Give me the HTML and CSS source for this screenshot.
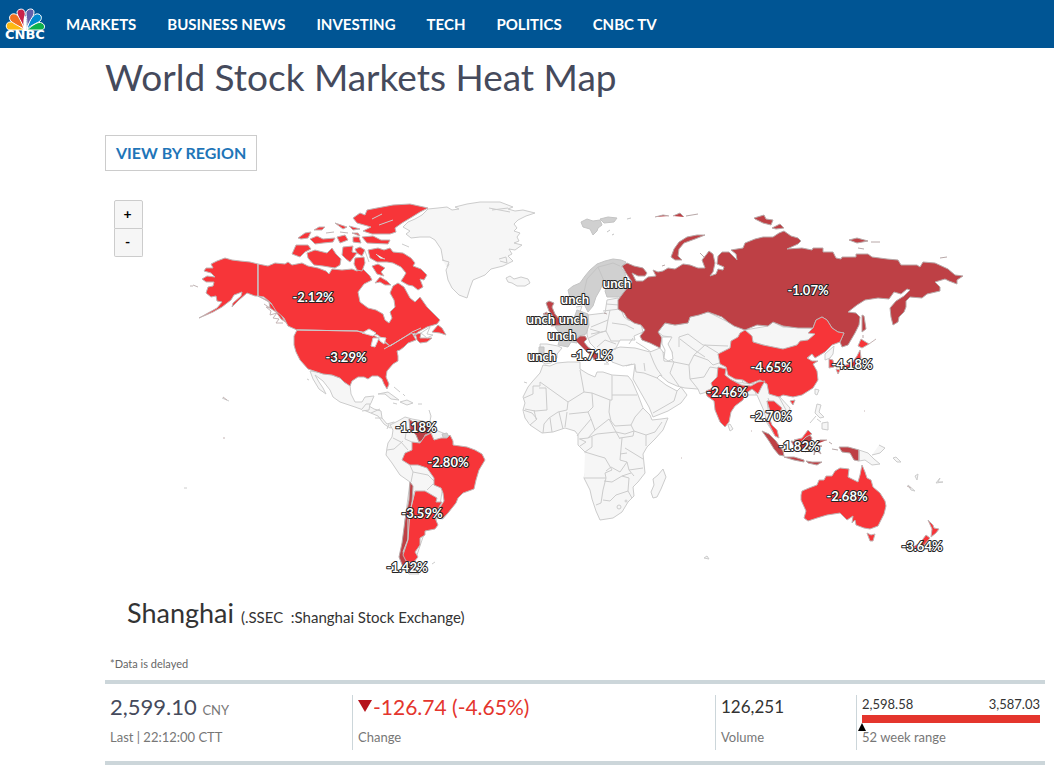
FILE: index.html
```html
<!DOCTYPE html>
<html lang="en">
<head>
  <meta charset="UTF-8">
  <meta name="viewport" content="width=device-width, initial-scale=1.0">
  <title>World Stock Markets Heat Map</title>
  <link rel="stylesheet" href="styles.css">
</head>
<body>
  <header class="topbar">
    <a href="#" class="logo" aria-label="CNBC">
      <svg width="48" height="40" viewBox="-2 -3 48 40">
        <g stroke="#fff" stroke-width="1">
          <path fill="#fdb913" d="M20 23H6C1 23 1 15 6 15C10 14 14 18 20 23Z"/>
          <path fill="#f37021" d="M20 22C15 19 8 16 6 13C4 8 9 5 13 8C17 11 18 16 20 22Z"/>
          <path fill="#c9234a" d="M20 21C18 15 13 9 13 5C14 1 21 1 21 6C22 8 19 10 20 21Z"/>
          <path fill="#6460aa" d="M23 21C23 11 22 8 22 5C24 1 30 1 30 5C30 10 25 15 23 21Z"/>
          <path fill="#0089cf" d="M23 22C25 15 28 9 32 7C37 6 39 11 36 14C34 16 27 18 23 22Z"/>
          <path fill="#0db14b" d="M23 23C29 18 34 14 38 16C42 18 41 23 37 23Z"/>
        </g>
        <path fill="#fff" d="M20 24V10L22 9L23 24Z"/>
        <text x="1" y="32" class="logo-text">CNBC</text>
      </svg>
    </a>
    <nav class="menu">
      <a href="#">MARKETS</a>
      <a href="#">BUSINESS NEWS</a>
      <a href="#">INVESTING</a>
      <a href="#">TECH</a>
      <a href="#">POLITICS</a>
      <a href="#">CNBC TV</a>
    </nav>
  </header>

  <main class="page">
    <h1>World Stock Markets Heat Map</h1>
    <button type="button" class="region-button">VIEW BY REGION</button>

    <div class="map">
      <div class="zoom">
        <button type="button" aria-label="Zoom in">+</button>
        <button type="button" aria-label="Zoom out">-</button>
      </div>
      <svg viewBox="105 185 940 400" role="img" aria-label="World map">
        <!-- markets without data -->
        <g class="none">
          <path d="M403 227L408 222 415 219 422 215 428 209 438 208 447 207 452 210 459 209 455 207 467 204 480 202 500 202 513 207 508 209 515 211 523 210 535 213 526 216 518 220 514 224 517 228 514 231 520 233 517 237 519 241 514 243 522 245 515 250 509 249 512 254 508 256 513 261 503 266 491 269 485 275 473 280 470 288 467 298 459 295 452 288 448 280 446 270 449 264 443 260 441 249 435 240 430 237 420 237 411 238 406 234 410 231Z"/>
          <path d="M442 260L449 262 447 267M499 259L506 257 507 263 500 261M489 208L510 212M492 210L508 208"/>
          <path d="M506 278L510 276 514 279 521 277 528 279 530 283 525 286 517 286 512 283 508 282Z"/>
          <!-- central america -->
          <path d="M310 371L323 373 332 375 340 378 344 382 350 385 351 394 355 402 362 402 365 397 374 396 371 403 369 406 374 409 381 411 382 418 387 424 394 422 398 425 390 428 384 424 378 416 366 411 355 407 340 402 333 397 330 390 323 381 315 375 319 382 323 388 326 394 319 389 313 379Z"/>
          <path d="M362 409L366 404H370L369 410 362 411M371 413L380 409M375 418L382 418M389 424L387 429"/>
          <path d="M378 394L388 392 399 400 391 399 385 394ZM400 402L407 400 413 403 407 405ZM393 403L397 404M418 404H422M394 387L400 392M403 394L405 396M429 410L431 416 430 421M307 379L309 380"/>
          <!-- south america -->
          <path d="M390 425L398 421 405 417 412 419 423 421 433 427 438 431 448 435 453 443 442 492 440 505 442 514 437 519 435 522 425 531 412 570 405 568 405 520 410 482 400 475 392 463 386 455 387 448 388 443 392 437 393 430Z"/>
          <path d="M393 438L401 442 408 450M387 450L394 449 403 441M409 463L413 472 411 482M413 472L428 475 435 482M427 490L433 484 442 488M427 492L435 499M430 431L432 439M407 427L405 439 412 442"/>
          <path d="M434 518L440 510 448 513 443 519ZM404 569L412 570 419 574 409 574ZM432 564L435 562"/>
          <!-- africa -->
          <path d="M543 365L550 366 557 363 568 362 580 362 580 369 588 374 595 377 597 372 603 372 612 375 628 376 632 381 638 395 643 408 650 415 652 420 661 419 668 418 663 430 655 439 647 447 643 454 645 473 638 482 633 487 634 496 628 502 622 512 613 518 600 520 596 511 592 499 590 490 584 478 588 463 585 452 578 445 578 435 575 431 565 428 553 432 542 433 530 425 525 418 523 410 525 403 523 397 528 387 532 382 540 373Z"/>
          <path d="M540 382L568 402 584 392 580 370M540 382V386H533V394L524 398M539 388H546L547 410 535 411 525 409M568 402L567 410 558 412 549 418 544 424M584 392L592 393 610 400M592 393L593 407 588 412 569 414M612 375V395H637M612 395V400H610L609 412 611 421 615 426 631 425 635 417 643 408M588 412L591 419 580 432 577 436M591 419L595 430 609 419M595 430L588 438 579 439M609 419L616 432 625 434 634 431 631 425M634 431L646 435 655 432 662 422 M646 435V446M616 432L620 439M588 438L597 434 616 432M585 452L598 456 605 458 612 470 605 473 606 478H584M606 471L611 467 620 472 627 462 620 460 622 438M620 438L633 436 634 431M620 454L627 453M625 448L643 459M627 462L629 470 643 468M629 470L634 476M606 478L603 490 601 503 596 505M604 481L612 482 622 476 629 478 628 491 616 495 610 501 603 500M628 491L632 498M622 476L631 473M544 424L543 433M550 418L552 432M559 412L563 429M567 412L565 427M580 439L586 442 580 446M592 437L592 447 585 452M523 410L532 413 537 419 530 425M534 410L536 419"/>
          <circle cx="619" cy="507" r="2"/><circle cx="626" cy="501" r="1"/>
          <path d="M663 469L666 477 661 489 657 497 653 498 651 492 654 485 653 479 658 475Z"/>
          <!-- middle east and central asia -->
          <path d="M611 350L620 347 635 348 650 352 660 348 663 352 664 361 674 362 672 352 666 342 671 337 663 336 658 332 665 323 675 325 688 323 690 317 708 312 728 322 745 330 768 326 773 322 783 327 813 328 820 340 790 385 780 397 790 408 788 416 783 420 780 411 767 401 770 423 777 432 774 434 767 423 764 411 757 395 745 395 725 390 707 392 700 394 698 389 685 388 677 386 668 382 660 375 657 378 666 385 677 391 681 387 687 395 681 403 668 411 653 417 649 407 641 393 633 379 635 364 623 366 612 362Z"/>
          <path d="M635 365L636 372 644 373 657 378M644 363L645 371M650 353L654 363 657 369 662 376M677 391L674 401 653 413M663 352L674 362 689 365 694 355 708 360 713 365 722 362M674 362L670 373 679 386M689 365L690 379 698 389M694 355L705 345 718 353M680 339L693 349 705 357M679 347V337L688 334 703 345 728 346M690 379L704 377 710 367 722 369M728 379L739 383 748 382M747 386L755 387 756 395M768 398L771 406M779 397L786 410M745 331L753 342 767 346 784 350 799 344 808 340 817 334"/>
          <path d="M742 378L754 384 743 383ZM730 424L733 429 730 431 728 425Z"/>
          <!-- eastern europe -->
          <path d="M588 315L605 313 607 300 618 298 620 307 624 317 628 320 641 324 643 332 634 336 635 340 620 340 616 348 610 351 612 358 607 363 603 356 597 350 590 343 587 335Z"/>
          <path d="M603 311L620 309M606 304L619 305M610 310L608 320 591 327M608 320L606 331 591 334M606 331L611 341 619 341M589 338L599 333 606 331M597 347L605 340 616 344M612 323L626 325 634 329M607 351L616 349M590 329L600 332M636 342L644 347 651 352M633 338L629 344"/>
          <path d="M540 344L547 344 558 346 562 348 557 354 557 358 551 363 545 364 541 361ZM576 307L582 306 580 312 576 311M604 364H609M626 366L632 364M543 348L542 358"/>
          <!-- east asia and oceania -->
          <path d="M825 354L834 346 833 354 830 358 825 360ZM815 389L819 390 817 395 815 394ZM817 404L821 405 819 412 824 417 820 418 815 413ZM822 423L828 422 828 430 822 429ZM810 423L816 416M817 419L821 422M859 450L868 453 874 459 880 464 872 465 865 460 859 461ZM872 455L880 453 885 448 879 445M524 382L527 383M222 398L229 401M184 488H187"/>
          <path d="M893 458L896 457 901 462 897 462ZM915 476L918 474 917 480ZM908 485L915 491 911 490ZM936 483L940 478 938 482 943 482ZM704 558L707 556 709 559Z"/>
        </g>

        <!-- unchanged markets -->
        <g class="flat">
          <path d="M581 222L587 219 593 221 600 220 602 225 598 228 597 231 593 235 590 229 583 227ZM600 219L608 217 617 218 614 222 604 223ZM627 219L631 218M607 232L610 230M612 235L614 234"/>
          <path d="M568 290L573 286 580 283 585 276 590 270 597 264 605 261 613 259 621 260 626 262 621 267 625 273 626 280 631 285 629 292 620 297 607 297 605 291 609 283 604 281 600 290 596 297 593 306 588 312 585 306 583 298 574 302 570 298Z"/>
          <path d="M583 296L587 279 598 267 604 281M598 267L606 265 613 263 620 266"/>
          <path d="M555 327L566 323 574 318 577 310 588 314 589 325 586 334 579 336 577 343 571 342 568 347 558 345 561 335ZM540 319L547 313 548 322 541 325ZM539 347H544L544 360H539Z"/>
          <path d="M442 434L447 433 449 437 444 440Z"/>
        </g>

        <!-- small losses -->
        <g class="low">
          <path d="M622 266L627 263 634 266 643 268 647 273 645 276 638 276 632 273 636 281 643 281 648 277 656 276 653 270 658 272 663 271 668 268 675 269 683 264 690 265 698 268 705 268 702 260 706 255 709 251 713 254 715 263 713 272 710 276 716 274 718 269 723 270 724 267 717 264 718 256 722 252 729 252 733 256 737 260 736 254 731 250 743 248 745 243 755 239 763 237 773 237 779 233 784 231 791 236 798 238 801 241 798 244 787 249 802 248 812 250 813 248 823 248 823 252 833 252 836 258 841 259 842 257 856 257 856 254 868 254 872 257 887 259 898 260 901 265 917 265 920 267 923 262 935 263 948 269 955 275 963 276 957 280 957 284 949 281 945 279 935 282 940 287 940 291 927 294 922 298 910 297 906 301 906 307 904 312 899 317 898 322 893 325 891 317 890 308 896 301 904 296 910 290 907 289 901 294 894 292 889 299 878 298 865 300 857 305 848 312 856 313 860 317 859 325 855 333 848 345 842 347 840 342 844 333 838 332 832 328 827 320 822 317 816 320 813 328 798 328 783 326 773 322 768 326 757 325 745 330 734 326 728 322 722 317 708 312 699 315 690 317 688 323 675 325 665 323 658 332 662 338 660 348 650 343 642 340 640 336 645 330 641 325 634 323 627 318 624 313 618 309 618 300 624 292 632 282 626 273Z"/>
          <path d="M671 257L674 249 679 242 687 237 697 235 705 235 695 239 684 243 679 249 678 256 682 260 675 260ZM754 218L764 215 766 219 773 220 771 225 763 223 755 219ZM772 228L780 224 784 228 776 229ZM655 217L663 215 669 216M673 216L680 213 684 217M686 216L698 214M662 266L665 265M849 240L857 238 868 241 857 243ZM871 242L880 242M858 248L864 249M940 258L947 257M862 315L864 316 866 329 862 332ZM863 335V338M604 313L607 314M700 253L704 257"/>
          <path d="M546 303L549 301 554 303 552 307 555 314 560 320 561 325 551 326 555 321 552 315 549 311ZM543 314L547 312 547 315Z"/>
          <path d="M575 340L580 336 585 336 587 339 584 342 588 347 594 351 598 356 594 360 592 356 587 352 581 346ZM577 352L580 351 579 357Z"/>
          <path d="M409 419L413 422 428 422 432 427 430 433 425 435 423 440 419 442 416 435 410 429Z"/>
          <path d="M410 482L413 486 412 503 408 520 408 540 403 553 408 562 413 570 403 567 399 557 402 543 405 520 409 500Z"/>
          <path d="M762 431L769 434 776 441 783 451 784 456 779 455 774 449 769 441ZM784 457L794 457 804 460 804 462 794 460ZM806 461L812 462 822 462 817 465 808 463ZM791 441L798 442 809 434 812 438 809 447 806 452 795 448ZM814 445L820 440 827 440M815 445L822 446 818 448 821 454 816 450 814 455ZM839 447L848 447 859 450 859 461 854 460 850 453 842 452ZM829 442L832 444M832 449L838 450"/>
        </g>

        <!-- heavy losses -->
        <g class="high">
          <!-- alaska -->
          <path d="M258 264L250 262 240 261 232 260 225 258 217 261 211 264 213 268 206 268 204 271 211 273 215 277 207 276 202 279 206 282 214 282 213 286 208 287 206 293 211 297 216 296 217 301 222 302 217 308 208 313 199 318 213 312 222 307 231 300 234 295 242 292 241 296 233 303 232 307 239 300 247 293 255 296 258 296 267 300 272 305 280 313 284 320 287 323 281 319 276 312 270 308 269 302 258 296ZM193 285L198 287M190 286H193"/>
          <!-- canada -->
          <path d="M258 264L268 266 275 263 285 264 288 262 292 265 302 263 308 266 318 268 326 271 329 274 332 269 342 270 352 269 357 271 362 268 366 272 370 276 372 280 364 284 358 292 360 302 368 308 376 310 383 314 385 320 389 323 392 318 390 312 395 307 394 300 390 293 393 286 398 283 404 287 410 298 415 302 420 297 427 307 433 313 440 320 437 324 427 327 418 332 408 340 417 334 421 333 420 338 432 338 427 342 420 343 417 340 415 333 403 338 390 346 378 335 357 331 297 330 288 326 284 318 276 311 271 303 264 297 258 296Z"/>
          <path d="M438 325L442 328 446 335 440 333 432 332ZM296 245L308 245 311 249 305 252 300 257 292 254ZM307 253L315 250 327 253 332 248 336 254 341 259 340 265 335 268 323 266 314 265 308 258ZM298 238L305 233 311 232 308 238 301 239ZM314 230L319 227 325 227 322 230ZM310 239L317 236 323 239 335 238 333 242 323 243 315 244ZM335 223L341 225 347 227 343 229ZM337 237L345 235 348 240 340 243ZM343 247L353 246 352 252 357 253 350 262 346 259 342 255ZM353 237L359 237 361 243 353 242ZM349 226L360 229 353 230ZM326 233L334 232M340 232L348 233M352 233L358 233 360 236ZM355 249L360 247 365 250 362 256 357 253ZM355 258L364 257 365 263 362 271 357 270 354 264Z"/>
          <path d="M353 218L360 213 365 215 367 210 377 208 393 205 410 204 428 208 420 212 412 217 402 223 395 228 396 232 390 234 372 234 363 231 371 227 357 223ZM362 237L373 236 381 240 390 240 388 244 367 243Z"/>
          <path d="M368 250L378 248 384 250 390 248 393 252 403 253 411 258 415 263 413 266 421 269 427 275 424 280 420 279 423 287 418 290 413 286 408 285 401 281 403 278 406 273 401 267 393 263 387 262 377 262 370 258ZM372 266L378 264 385 268 381 272 384 276 377 274ZM375 283L380 277 387 281 391 285 385 285 380 282Z"/>
          <!-- usa -->
          <path d="M297 330L357 331 368 334 375 336 390 346 403 338 412 333 416 340 408 343 404 347 400 350 397 351 398 356 398 361 393 364 387 371 386 377 389 384 387 389 384 384 382 379 378 376 372 376 368 379 364 377 358 377 352 381 350 386 344 382 340 378 332 375 323 374 314 371 308 369 300 360 296 352 294 345 294 336Z"/>
          <!-- brazil, argentina -->
          <path d="M412 442L420 443 425 436 431 433 434 440 441 438 447 438 450 435 453 441 453 445 467 447 475 450 482 454 485 460 479 470 476 480 474 489 463 493 458 498 456 503 448 513 442 519 437 512 444 501 443 493 441 488 434 485 434 478 427 468 418 465 410 465 402 460 405 453 412 450Z"/>
          <path d="M415 491L425 491 437 498 436 502 442 502 438 509 435 518 438 525 435 529 425 531 425 535 420 538 420 545 415 552 418 557 413 563 406 561 403 555 408 540 408 520 412 503Z"/>
          <!-- china, india -->
          <path d="M718 354L730 348 731 341 738 337 740 333 745 330 752 336 753 342 763 345 783 349 797 345 800 341 808 340 815 334 808 333 813 328 816 320 822 317 827 320 832 328 838 332 844 333 840 342 832 345 825 352 815 358 812 354 807 358 812 361 818 361 813 364 817 371 818 380 813 388 802 395 793 397 783 395 779 397 769 394 767 384 760 380 749 384 743 380 735 379 728 375 726 367 720 364Z"/>
          <path d="M718 367L726 369 725 375 730 379 741 385 751 386 758 382 765 381 762 386 758 394 752 389 745 394 743 400 735 406 731 412 729 422 725 427 720 422 715 410 714 401 707 396 706 391 713 388 711 383 717 377ZM790 401L795 400 793 405Z"/>
          <path d="M767 401L774 401 782 408 780 412 772 412 770 420 772 425 777 430 779 438 775 436 771 428 768 422 770 411ZM794 440L802 438 808 430 812 434 806 437 801 442Z"/>
          <!-- korea, japan -->
          <path d="M829 359L833 360 834 367 829 368ZM861 339L869 344 862 348 858 346ZM860 350L861 358 855 366 846 368 843 366 852 363 857 356ZM836 369L840 370 838 374Z"/>
          <!-- australia, new zealand -->
          <path d="M801 495L802 491 809 488 817 485 819 480 824 480 826 476 832 476 835 471 840 468 849 469 848 477 858 482 860 475 862 465 865 472 867 478 871 480 873 487 880 493 885 501 886 506 884 514 878 526 870 529 864 528 856 525 855 520 852 523 853 516 847 520 840 513 827 515 817 518 808 521 804 518 806 511 801 500ZM867 533L871 535 875 534 873 541 870 541ZM928 520L933 525 934 528 939 529 936 533 931 537 932 529ZM926 535L930 538 924 545 917 549 913 547 920 543Z"/>
        </g>

        <!-- lakes and inland seas -->
        <g class="water">
          <path d="M362 333L369 329 376 333 373 336ZM371 346L373 338 379 338 375 347ZM378 337L386 338 384 344 380 341ZM384 349L393 344M421 333L430 327 427 334 433 335 427 338ZM662 337L672 337 668 344 672 352 673 359 668 361 664 358 665 350 662 344ZM402 244L409 247M365 251L369 262M379 225L393 220M372 219L382 214M376 254L380 258 385 259"/>
        </g>

        <!-- borders that sit on top of the fills -->
        <path class="border" d="M258 264V296M297 330L357 331 365 333M390 346L403 338 412 332 421 328M859 450V461M415 491L410 512 408 539 403 552"/>
        <path class="isles" d="M869 344L876 339M264 304L270 308 266 307 271 311 270 315 277 313 273 318 279 319 276 323 283 323M223 397L227 400M223 438H225M681 458H682M751 431H752M911 488L907 486M864 411H865"/>

        <g class="labels">
          <text x="313" y="302">-2.12%</text>
          <text x="346" y="362">-3.29%</text>
          <text x="416" y="432">-1.18%</text>
          <text x="448" y="467">-2.80%</text>
          <text x="422" y="518">-3.59%</text>
          <text x="407" y="572">-1.42%</text>
          <text x="617" y="288">unch</text>
          <text x="575" y="304">unch</text>
          <text x="541" y="324">unch</text>
          <text x="573" y="324">unch</text>
          <text x="562" y="340">unch</text>
          <text x="542" y="361">unch</text>
          <text x="592" y="360">-1.71%</text>
          <text x="808" y="295">-1.07%</text>
          <text x="771" y="372">-4.65%</text>
          <text x="852" y="369">-4.18%</text>
          <text x="727" y="397">-2.46%</text>
          <text x="771" y="421">-2.70%</text>
          <text x="799" y="451">-1.82%</text>
          <text x="847" y="501">-2.68%</text>
          <text x="922" y="551">-3.64%</text>
        </g>
      </svg>
    </div>

    <h2>Shanghai <small>(.SSEC &nbsp;:Shanghai Stock Exchange)</small></h2>
    <p class="delayed">*Data is delayed</p>

    <section class="quote">
      <div class="cell">
        <div class="value last">2,599.10 <span>CNY</span></div>
        <div class="caption">Last | 22:12:00 CTT</div>
      </div>
      <div class="cell">
        <div class="value change"><i class="down"></i>-126.74 (-4.65%)</div>
        <div class="caption">Change</div>
      </div>
      <div class="cell">
        <div class="value volume">126,251</div>
        <div class="caption">Volume</div>
      </div>
      <div class="cell">
        <div class="value range">
          <div class="range-ends"><span>2,598.58</span><span>3,587.03</span></div>
          <div class="range-bar"><i class="marker"></i></div>
        </div>
        <div class="caption">52 week range</div>
      </div>
    </section>
  </main>
</body>
</html>
```
FILE: styles.css
```css
* {
  box-sizing: border-box;
}
body {
  margin: 0;
  background: #fff;
  color: #333;
  font-family: Lato, "Liberation Sans", sans-serif;
}
.topbar {
  display: flex;
  align-items: center;
  height: 48px;
  padding-left: 2px;
  background: #005594;
}
.logo {
  display: flex;
  margin-right: 16px;
}
.logo-text {
  font-family: "DejaVu Sans", sans-serif;
  font-size: 13px;
  font-weight: bold;
  fill: #fff;
}
.menu {
  display: flex;
  gap: 31px;
}
.menu a {
  color: #fff;
  font-size: 15px;
  font-weight: bold;
  text-decoration: none;
  white-space: nowrap;
}
.page {
  margin: 0 9px 0 105px;
}
h1 {
  margin: 0;
  padding: 7px 0 36px;
  color: #454a5c;
  font-size: 37px;
  font-weight: 400;
  line-height: 44px;
}
.region-button {
  display: block;
  height: 36px;
  padding: 0 10px 2px;
  border: 1px solid #ccc;
  background: #fff;
  color: #1f75b8;
  font-family: inherit;
  font-size: 16px;
  font-weight: bold;
}
.map {
  position: relative;
  margin-top: 14px;
}
.map svg {
  display: block;
  width: 100%;
}
.zoom {
  position: absolute;
  top: 15px;
  left: 9px;
  width: 29px;
}
.zoom button {
  display: block;
  width: 100%;
  height: 29px;
  padding: 0 2px 2px 0;
  border: 1px solid #ccc;
  border-radius: 2px 2px 0 0;
  background: #f6f6f6;
  color: #000;
  font-family: inherit;
  font-size: 14px;
  font-weight: bold;
}
.zoom button + button {
  height: 28px;
  border-top: 0;
  border-radius: 0 0 2px 2px;
}
.none {
  fill: #f6f6f6;
  stroke: #ccc;
}
.flat {
  fill: #d0d0d0;
  stroke: #c4c4c4;
}
.low {
  fill: #be4045;
  stroke: #b8a8a8;
}
.high {
  fill: #f73539;
  stroke: #c0b4b4;
}
.water {
  fill: #fff;
  stroke: #ccc;
}
.border {
  fill: none;
  stroke: #ccc;
}
.isles {
  fill: none;
  stroke: #c4b4b4;
}
.labels {
  font-size: 13px;
  font-weight: bold;
  text-anchor: middle;
  fill: #fff;
  stroke: #222;
  stroke-width: 2px;
  stroke-linejoin: round;
  paint-order: stroke;
}
h2 {
  margin: 9px 0 0 22px;
  font-size: 27px;
  font-weight: 400;
  line-height: 38px;
}
h2 small {
  font-size: 15px;
}
.delayed {
  margin: 20px 0 8px 5px;
  color: #666;
  font-size: 11px;
  line-height: 16px;
}
.quote {
  display: grid;
  grid-template-columns: 247fr 363fr 141fr 189fr;
  padding: 11px 0;
  border-top: 4px solid #ccd6da;
  border-bottom: 4px solid #ccd6da;
}
.cell {
  height: 55px;
  padding: 0 5px;
  border-left: 1px solid #ccd6da;
}
.cell:first-child {
  border-left: 0;
}
.value {
  height: 34px;
  line-height: 24px;
}
.last {
  color: #454a5c;
  font-size: 22px;
}
.last span {
  color: #777;
  font-size: 13px;
}
.change {
  color: #e4352d;
  font-size: 21px;
}
.down {
  display: inline-block;
  margin-right: 1px;
  border: 7px solid transparent;
  border-top: 12px solid #b5121b;
  border-bottom: 0;
  vertical-align: 3px;
}
.volume {
  font-size: 17px;
}
.caption {
  color: #777;
  font-size: 13px;
  line-height: 16px;
}
.range-ends {
  display: flex;
  justify-content: space-between;
  font-size: 13px;
  line-height: 18px;
}
.range-bar {
  position: relative;
  height: 8px;
  margin-top: 2px;
  background: #e4352d;
}
.marker {
  position: absolute;
  top: 8px;
  left: -4px;
  border: 4px solid transparent;
  border-top: 0;
  border-bottom: 8px solid #000;
}
```
